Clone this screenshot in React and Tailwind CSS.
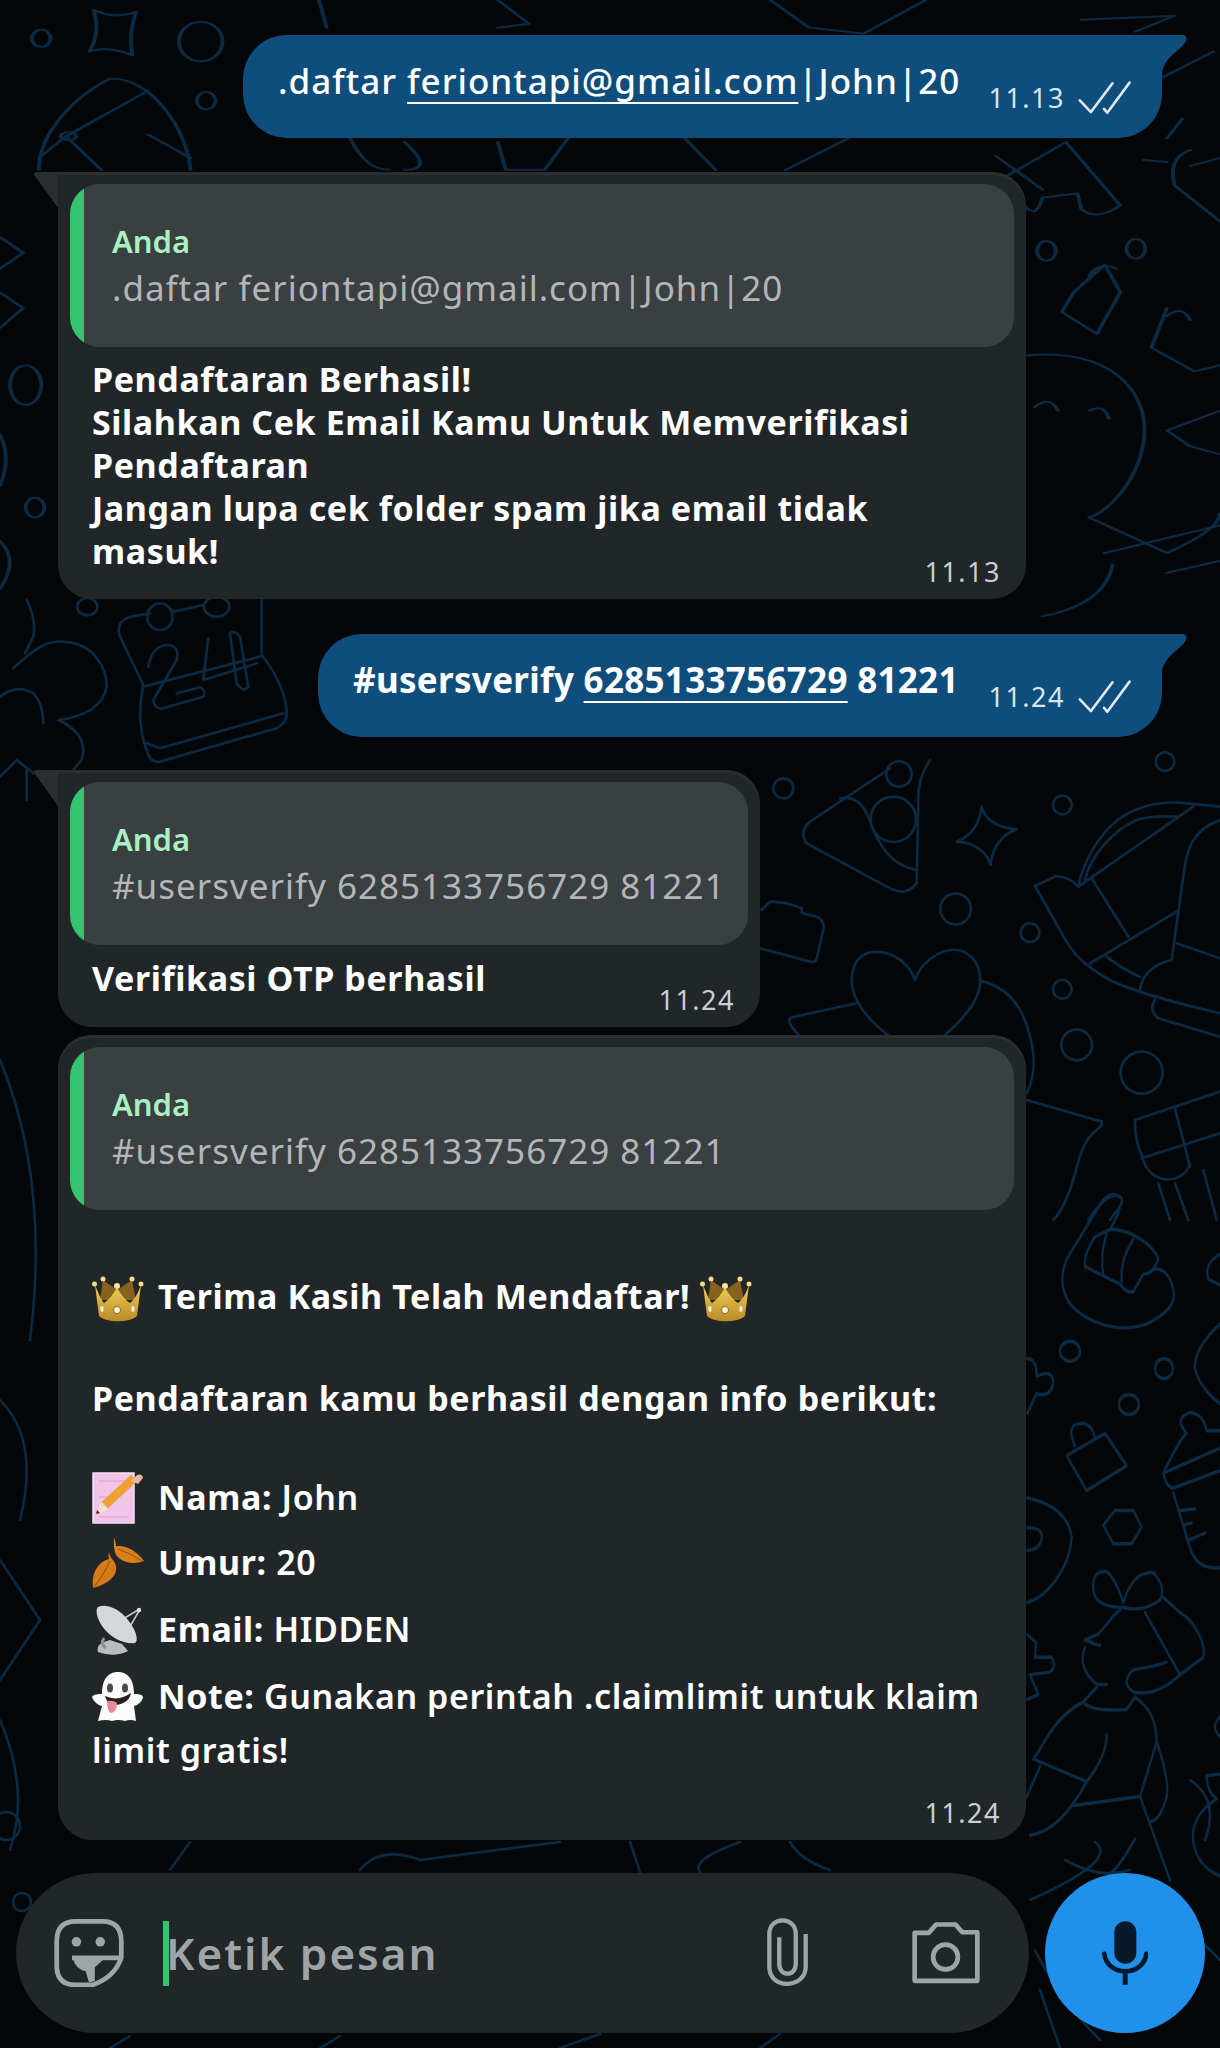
import React from 'react';

const FONT = "font-['Noto_Sans',sans-serif]";

function Wallpaper() {
  return (
    <svg className="absolute inset-0" width="1220" height="2048" viewBox="0 0 1220 2048" fill="none" stroke="#0b2b44" strokeWidth="2.6" strokeLinecap="round" strokeLinejoin="round">
      {/* right middle, traced from the picture */}
      <g transform="translate(760 760) scale(0.3333)" strokeWidth="8">
        <path d="M390 25 L150 185 Q115 215 140 250 L390 385 Q440 410 470 370 L475 130 Q470 60 510 0" />
        <path d="M240 115 C300 105 320 150 340 210 C370 280 410 320 470 330" />
        <circle cx="400" cy="178" r="68" />
        <circle cx="417" cy="42" r="38" />
        <circle cx="70" cy="85" r="30" />
        <circle cx="907" cy="135" r="28" />
        <circle cx="587" cy="447" r="46" />
        <circle cx="810" cy="518" r="28" />
        <circle cx="907" cy="688" r="28" />
        <circle cx="950" cy="855" r="46" />
        <circle cx="1145" cy="938" r="63" />
        <circle cx="1215" cy="5" r="28" />
        <path d="M665 140 Q680 200 770 208 Q700 235 692 315 Q670 250 590 245 Q655 220 665 140Z" />
        <path d="M465 660 C440 590 370 565 320 580 C270 600 265 670 290 720 C310 760 350 800 385 825 M465 660 C490 590 570 550 620 580 C670 610 670 680 640 730 C615 770 585 800 555 825" />
        <path d="M290 730 L95 772 Q80 780 95 800 L115 825" />
        <path d="M660 662 C740 680 790 740 810 830 C830 900 820 960 800 1000" />
        <path d="M800 1020 L1025 1085 Q1030 1095 1010 1110 C960 1150 960 1200 930 1290 C915 1330 900 1360 880 1380" />
        <path d="M5 450 L30 425 Q80 425 125 445 L125 460 L170 470 Q195 480 190 510 L170 595 Q165 610 150 605 L0 565" />
        <path d="M825 378 L885 350 Q920 345 955 380 Q975 280 1050 200 C1110 140 1200 120 1280 130 L1380 140" />
        <path d="M975 360 C990 290 1060 210 1130 180 C1180 165 1230 170 1250 170 M955 380 L1300 140" />
        <path d="M825 378 L900 510 C940 590 980 620 1050 660 C1110 690 1250 730 1380 760" />
        <path d="M995 355 L1105 530 M990 610 L1250 455 M1250 550 L1380 595 M1040 590 Q1090 630 1140 650" />
        <path d="M1380 180 C1300 210 1280 260 1270 350 L1235 600 Q1150 620 1140 690" />
        <path d="M1185 720 Q1165 750 1195 775 L1380 830" />
        <path d="M1125 1080 L1380 995 M1125 1085 Q1125 1150 1150 1195 M1145 1195 L1380 1120 M1245 1045 L1290 1220 M1150 1200 C1170 1270 1260 1280 1290 1215 M1195 1270 L1230 1380 M1245 1270 L1285 1380 M1330 1230 L1370 1380" />
        <path d="M985 1380 Q1030 1310 1070 1305 Q1095 1310 1080 1340 L1050 1380" />
      </g>
      {/* right lower */}
      <g transform="translate(1020 1100) scale(0.3333 0.4975)" strokeWidth="7">
        <path d="M300 195 Q270 180 240 210 L140 320 Q110 370 150 410 C200 450 300 470 380 450 C440 430 470 410 460 380 C450 350 420 330 390 345" />
        <path d="M300 215 Q290 240 270 260 C330 260 400 290 415 320 Q400 350 370 350 L340 385 Q320 390 300 370 L195 335 Q190 310 225 275 L270 260 M260 270 Q240 310 250 350 M340 280 Q300 320 305 365" />
        <ellipse cx="150" cy="505" rx="30" ry="20" />
        <ellipse cx="432" cy="540" rx="27" ry="20" />
        <ellipse cx="327" cy="612" rx="30" ry="20" />
        <path d="M140 715 L255 670 L320 735 L200 785 Z M165 695 Q135 650 185 650 Q215 650 225 680" />
        <path d="M250 855 L285 825 L340 825 L365 858 L335 892 L280 892Z" />
        <path d="M430 750 Q480 680 500 670 Q460 640 510 628 Q550 630 560 665 L600 665 M430 750 L600 700 M430 750 Q440 780 460 780 L600 745 M460 790 L510 900 Q530 945 600 940 M480 825 L525 822 M490 855 L515 850 M505 885 L555 870" />
        <path d="M220 985 Q215 945 260 948 Q285 960 310 1010 Q340 945 400 950 Q440 980 420 1005 Q370 1030 310 1020 Q225 1020 220 985Z" />
        <path d="M300 1025 C270 1040 240 1075 230 1075 L195 1085 Q245 1100 240 1095 M195 1100 Q170 1140 230 1175 L260 1175" />
        <path d="M430 1000 L480 1030 C530 1050 560 1100 550 1120 L480 1155 Q410 1200 340 1190 Q300 1170 340 1145 Q400 1140 440 1130 M375 1030 L480 1155" />
        <path d="M230 1180 L190 1210 C100 1240 70 1300 40 1325 L200 1370 Q260 1320 260 1275 M190 1210 Q210 1230 320 1225 L345 1200 Q410 1230 410 1290 L360 1400 L160 1418" />
        <path d="M60 1340 L20 1400 M200 1370 Q120 1470 30 1478 M410 1290 Q450 1370 440 1400 Q420 1450 390 1450 M360 1400 L450 1568 M345 1485 Q300 1540 270 1555" />
        <path d="M22 800 C100 810 150 840 155 880 C150 940 80 1000 22 1010 M22 860 Q70 860 65 880 Q60 905 22 905" />
        <path d="M22 520 Q50 520 50 555 Q100 540 100 570 Q90 600 50 590 L22 630 M22 1075 L48 1090 L45 1120 L95 1120 Q110 1140 90 1150 L30 1155 L55 1195 L22 1205" />
        <path d="M600 310 Q550 330 565 360 L600 372 M600 450 Q520 500 525 540 Q540 580 600 610 M600 1240 Q570 1260 600 1280 M600 1355 L560 1358 Q560 1390 590 1405 Q510 1440 520 1490 Q530 1540 600 1560" />
      </g>
      {/* calendar and clover on the left */}
      <g transform="translate(0 600) scale(0.3333)" strokeWidth="8">
        <path d="M785 0 L785 165 C830 220 860 290 860 340 Q860 370 830 385 L480 485 Q450 490 440 450 C420 400 415 330 430 255 L360 110 Q345 65 390 50 L450 40 M520 35 L610 15" />
        <ellipse cx="480" cy="50" rx="38" ry="40" />
        <ellipse cx="650" cy="20" rx="38" ry="30" />
        <ellipse cx="262" cy="20" rx="30" ry="26" />
        <path d="M430 260 L780 170 M440 430 L480 445 L850 340" />
        <path d="M445 200 Q455 140 500 135 Q540 135 530 180 L460 300 Q465 330 490 325 L610 290 Q620 270 600 262 L530 280" />
        <path d="M625 115 L610 240 L770 190 M690 100 L710 250 Q730 280 745 260 L720 110 Q700 90 690 100" />
        <path d="M40 205 C90 160 130 120 190 125 C280 130 320 200 320 260 C310 320 250 350 175 360 C240 390 260 430 245 480 L220 510" />
        <path d="M0 290 Q50 250 100 280 Q130 310 130 370 M80 0 Q110 60 100 110 L75 160 M0 530 L50 480 L100 520 M80 510 L80 600" />
      </g>
      {/* top band */}
      <g transform="scale(0.778 0.395)" strokeWidth="5">
        <ellipse cx="53" cy="97" rx="12" ry="22" />
        <ellipse cx="258" cy="105" rx="28" ry="50" />
        <ellipse cx="265" cy="255" rx="12" ry="22" />
        <path d="M120 25 Q150 50 175 30 Q165 80 170 140 Q140 115 115 130 Q130 80 120 25Z" />
        <path d="M50 430 C50 330 100 240 140 200 C190 190 240 320 245 430 M85 345 L190 230 M85 345 L130 430 M85 345 L50 400 M190 340 L245 400" />
        <circle cx="88" cy="345" r="10" />
        <path d="M410 0 L420 70 M640 0 L680 60 L640 70 M990 0 L1040 70 L1110 85 L1190 0 M1390 50 L1510 40 L1460 80 M1490 200 L1560 130 M1520 300 L1500 350 M1470 405 L1500 410" />
        <path d="M450 350 Q470 430 500 430 M520 360 Q560 430 520 430 M640 360 L650 430 L700 430 L730 350 M880 350 L920 430 M1010 430 L1090 350" />
        <path d="M1290 450 L1370 360 L1440 520 Q1410 560 1390 530 L1385 490 L1340 500 Q1330 570 1310 500 M1280 395 L1340 480" />
        <path d="M1530 380 Q1500 400 1510 470 L1568 560 M1530 420 L1568 400" />
        <ellipse cx="1345" cy="635" rx="12" ry="25" />
        <ellipse cx="1460" cy="630" rx="12" ry="25" />
        <path d="M1420 670 L1380 740 L1365 790 L1410 845 L1440 740 Z M1400 700 Q1410 660 1435 680" />
        <path d="M1500 780 L1480 880 L1535 940 L1568 925 M1500 800 Q1520 770 1530 810" />
        <path d="M1320 900 C1420 880 1480 980 1470 1120 C1460 1230 1420 1300 1400 1310 L1500 1400 Q1568 1340 1568 1300 M1400 1040 Q1420 1020 1425 1060 M1330 1030 Q1350 1000 1360 1040 M1568 1040 L1500 1090 L1530 1130 L1568 1150" />
        <path d="M1420 1400 L1568 1330 M1500 1450 L1568 1420 M1340 1560 Q1420 1530 1430 1430" />
        <ellipse cx="33" cy="975" rx="20" ry="50" />
        <ellipse cx="45" cy="1285" rx="12" ry="25" />
        <path d="M0 600 L30 640 L0 680 M0 740 L30 780 L0 830 M0 1100 Q15 1160 0 1230 M0 1370 Q25 1420 0 1490" />
      </g>
      {/* strip along the left edge and under the last bubble */}
      <path d="M0 1060 Q50 1180 30 1340 M0 1400 Q40 1440 20 1520 M0 1560 L40 1620 L0 1680 M0 1720 Q30 1790 10 1850" />
      <circle cx="6" cy="1826" r="14" />
      <circle cx="22" cy="1902" r="9" />
      <path d="M170 1870 L190 1842 M360 1870 Q380 1845 420 1860 L560 1842 M640 1872 L630 1842 M740 1842 Q690 1860 700 1872 M790 1842 Q800 1860 830 1870 M1095 1842 Q1120 1860 1030 1900 M1065 1860 Q1100 1880 1130 1870 M1190 1780 Q1220 1800 1205 1840" />
      <path d="M110 2048 L130 2036 M320 2048 L340 2036 M560 2048 L600 2034 M760 2048 L780 2034 M1040 1990 L1060 2048 M1035 1950 Q1060 2000 1100 2040 M1200 1940 L1220 1960" />
    </svg>
  );
}

function Checks() {
  return (
    <svg width="56" height="36" viewBox="350 180 170 110" fill="none" stroke="#dfe8ee" strokeWidth="8" strokeLinecap="round" strokeLinejoin="round">
      <path d="M358 242 L392 278 L458 190" />
      <path d="M432 268 L442 280 L510 188" />
    </svg>
  );
}

function Time({ children, className }) {
  return <span className={`text-[27px] leading-[36px] tracking-[1.5px] text-[#c9d0d3] ${className || ''}`}>{children}</span>;
}

function SentBubble({ width, children, time }) {
  return (
    <div className={`relative ml-auto mr-[58px] flex h-[103px] justify-between rounded-bl-[44px] rounded-br-[44px] rounded-tl-[44px] bg-[#0f4d7c] pl-[35px] pr-[29px] pt-[19px] ${width}`}>
      <svg className="absolute left-full top-0" width="25" height="36" viewBox="0 0 25 36">
        <path d="M0 0 L20 0 Q26 0 24 6 C20 15 6 18 0 36 Z" fill="#0f4d7c" />
      </svg>
      <div className="text-[35px] font-medium leading-[54px] tracking-[1px] text-white">{children}</div>
      <div className="flex items-center gap-[12px] self-end pb-[22px]">
        <Time className="text-[#dce5ea]">{time}</Time>
        <Checks />
      </div>
    </div>
  );
}

function Quote({ text }) {
  return (
    <div className="flex h-[163px] overflow-hidden rounded-[30px] bg-[#3a3f42]">
      <div className="w-[14px] flex-none bg-[#35c46f]" />
      <div className="pl-[28px] pt-[35px]">
        <div className="text-[31px] font-semibold leading-[44px] text-[#a9f0c3]">Anda</div>
        <div className="mt-[2px] text-[35px] leading-[46px] tracking-[1px] text-[#b3b6b8]">{text}</div>
      </div>
    </div>
  );
}

function ReceivedBubble({ width, tail, children, time, className }) {
  return (
    <div className={`relative ml-[58px] rounded-[34px] bg-[#212629] p-[12px] shadow-[inset_0_3px_0_#2b2f32] ${tail ? 'rounded-tl-none' : ''} ${width} ${className || ''}`}>
      {tail && (
        <svg className="absolute right-full top-0" width="25" height="36" viewBox="0 0 25 36">
          <path d="M25 0 L4 0 Q-1 0 2 4 L25 36 Z" fill="#2a2e31" />
        </svg>
      )}
      {children}
      <Time className="absolute bottom-[9px] right-[25px]">{time}</Time>
    </div>
  );
}

function Crown() {
  return (
    <svg width="52" height="48" viewBox="0 0 52 48">
      <defs>
        <linearGradient id="crownGold" x1="0" y1="0" x2="0" y2="1">
          <stop offset="0" stopColor="#f2cf5c" />
          <stop offset="1" stopColor="#b98b24" />
        </linearGradient>
      </defs>
      <path d="M11 4 L8 24 L44 24 L40 4 L25 14 Z" fill="#87621c" />
      <path d="M3 9 C8 21 10 25 12 27 C17 24 21 18 25 12 C29 18 33 24 38 27 C41 25 45 20 49 9 L45 40 C38 47 14 47 7 40 Z" fill="url(#crownGold)" />
      <circle cx="2.5" cy="8" r="2.5" fill="#f6dd85" />
      <circle cx="11" cy="3" r="2.5" fill="#f6dd85" />
      <circle cx="25" cy="10" r="3" fill="#f8e39a" />
      <circle cx="40" cy="3" r="2.5" fill="#f6dd85" />
      <circle cx="49" cy="8" r="2.5" fill="#f6dd85" />
      <circle cx="25" cy="34" r="3.6" fill="#f1efe6" stroke="#8e6d20" />
      <ellipse cx="10" cy="33" rx="1.6" ry="3" fill="#f3efe0" />
      <ellipse cx="41" cy="33" rx="1.6" ry="3" fill="#f3efe0" />
    </svg>
  );
}

function Memo() {
  return (
    <svg width="52" height="52" viewBox="0 0 52 52">
      <rect x="1" y="1" width="41" height="50" fill="#f1c5e9" stroke="#f8def4" strokeWidth="1.5" />
      <path d="M7 9 H37 M7 25 H26 M7 45 H37" stroke="#dc9ccf" strokeWidth="1" />
      <path d="M13 33 L42 6" stroke="#eea031" strokeWidth="9" />
      <path d="M39 9 L45 3 Q50 1 51 6 L46 12 Z" fill="#eeb4a8" />
      <path d="M9 31 L16 38 L5 42 Z" fill="#f5e3c6" />
      <path d="M5 38 L8 41 L4 42 Z" fill="#5d2310" />
    </svg>
  );
}

function Leaves() {
  return (
    <svg width="52" height="52" viewBox="0 0 52 52">
      <path d="M22 0 Q24 6 24 9 C34 8 44 13 52 24 C42 28 30 26 24 18 Q21 11 22 0Z" fill="#d9801b" />
      <path d="M26 12 Q38 16 50 24" stroke="#8f4f0c" strokeWidth="1" fill="none" />
      <path d="M17 15 Q18 20 20 22 C28 30 26 44 1 51 C-1 38 5 25 17 22 Q16 18 17 15Z" fill="#d67a17" />
      <path d="M18 24 Q12 38 2 50" stroke="#8f4f0c" strokeWidth="1" fill="none" />
    </svg>
  );
}

function Dish() {
  return (
    <svg width="52" height="52" viewBox="0 0 52 52">
      <path d="M18 36 C10 38 4 41 6 48 Q22 54 36 47 L30 40 Z" fill="#b9bcbe" />
      <path d="M26 18 L46 6 M36 26 L47 7" stroke="#c6c9cb" strokeWidth="1.5" />
      <circle cx="47" cy="6" r="2.2" fill="#dfe1e2" />
      <path d="M6 3 C14 -1 28 5 36 16 C44 26 47 36 43 39 C34 41 18 34 10 22 C5 14 3 7 6 3Z" fill="#d5d8da" />
      <path d="M12 34 Q8 40 14 44" stroke="#8d9092" strokeWidth="3" fill="none" />
    </svg>
  );
}

function Ghost() {
  return (
    <svg width="52" height="50" viewBox="0 0 52 50">
      <path d="M10 22 C10 5 18 0 26 0 C34 0 42 5 42 22 C46 22 50 22 51 25 C50 30 46 33 42 34 L44 49 Q38 47 33 49 Q26 47 20 49 Q14 47 6 49 L10 34 C6 33 2 30 0 25 C2 22 6 22 10 22Z" fill="#fbfbfb" />
      <ellipse cx="18" cy="16" rx="3" ry="4.5" fill="#4a4a4e" />
      <ellipse cx="33" cy="16" rx="3" ry="4.5" fill="#4a4a4e" />
      <path d="M13 24 Q26 30 39 21 C38 30 26 35 19 32 Q14 29 13 24Z" fill="#262224" />
      <path d="M15 29 Q22 28 25 31 Q25 40 19 41 Q15 39 15 29Z" fill="#e58a94" />
    </svg>
  );
}

function Row({ emoji, children, className }) {
  return (
    <div className={`flex h-[65px] items-center whitespace-pre ${className || ''}`}>
      <span className="mr-[14px] flex h-[52px] w-[52px] flex-none items-center justify-center">{emoji}</span>
      <span>{children}</span>
    </div>
  );
}

function InputBar() {
  const icon = '#9fa5a6';
  return (
    <div className="mt-[33px] flex items-center gap-[16px] pl-[16px] pr-[15px]">
      <div className="flex h-[160px] w-[1014px] items-center rounded-[80px] bg-[#212629] pl-[38px]">
        <svg width="70" height="68" viewBox="103 58 204 200" fill="none" stroke={icon} strokeWidth="14" strokeLinejoin="round">
          <path d="M165 65 L245 65 Q300 65 300 125 L300 172 Q280 230 215 252 L165 252 Q110 252 110 195 L110 125 Q110 65 165 65Z" />
          <circle cx="168" cy="125" r="14" fill={icon} stroke="none" />
          <circle cx="238" cy="125" r="14" fill={icon} stroke="none" />
          <path d="M155 172 L295 172" />
          <path d="M158 175 Q165 205 195 212 L205 245 L222 240 L222 200 L250 175 Z" fill={icon} stroke="none" />
        </svg>
        <div className="relative z-10 ml-[39px] h-[65px] w-[6px] bg-[#35c46f]" />
        <div className="ml-[-3px] text-[44px] font-semibold leading-[65px] tracking-[2px] text-[#9fa5a6]">Ketik pesan</div>
        <svg className="ml-auto" width="43" height="72" viewBox="118 105 130 215" fill="none" stroke={icon} strokeWidth="13" strokeLinecap="butt">
          <path d="M235 155 L235 255 C235 320 125 325 125 255 L125 155 C125 100 205 100 205 155 L205 245 C205 285 155 285 155 245 L155 165" />
        </svg>
        <svg className="ml-[102px] mr-[49px]" width="68" height="62" viewBox="550 128 203 184" fill="none" stroke={icon} strokeWidth="14" strokeLinejoin="round">
          <path d="M558 160 L600 160 L622 135 L680 135 L700 158 L745 158 L745 303 L558 303 Z" />
          <circle cx="650" cy="232" r="37" />
        </svg>
      </div>
      <div className="flex h-[160px] w-[160px] items-center justify-center rounded-full bg-[#2190ea]">
        <svg width="46" height="66" viewBox="1115 115 138 195" fill="none">
          <rect x="1152" y="117" width="66" height="128" rx="33" fill="#08192b" />
          <path d="M1122 215 C1130 285 1240 285 1248 215" stroke="#08192b" strokeWidth="14" strokeLinecap="round" />
          <rect x="1177" y="268" width="15" height="40" fill="#08192b" />
        </svg>
      </div>
    </div>
  );
}

export default function App() {
  return (
    <div className={`relative h-[2048px] w-[1220px] overflow-hidden bg-[#040608] ${FONT}`}>
      <Wallpaper />
      <div className="relative pt-[35px]">
        <SentBubble width="w-[919px]" time="11.13">
          .daftar <span className="underline decoration-2 underline-offset-[8px]">feriontapi@gmail.com</span>|John|20
        </SentBubble>

        <ReceivedBubble width="w-[968px]" tail time="11.13" className="mt-[34px]">
          <Quote text=".daftar feriontapi@gmail.com|John|20" />
          <div className="px-[22px] pb-[14px] pt-[11px] text-[34px] font-bold leading-[43px] tracking-[0.6px] text-white">
            Pendaftaran Berhasil!<br />
            Silahkan Cek Email Kamu Untuk Memverifikasi<br />
            Pendaftaran<br />
            Jangan lupa cek folder spam jika email tidak<br />
            masuk!
          </div>
        </ReceivedBubble>

        <div className="mt-[35px]">
          <SentBubble width="w-[844px]" time="11.24">
            <span className="font-bold tracking-[0.3px]">#usersverify <span className="underline decoration-2 underline-offset-[8px]">6285133756729</span> 81221</span>
          </SentBubble>
        </div>

        <ReceivedBubble width="w-[702px]" tail time="11.24" className="mt-[33px]">
          <Quote text="#usersverify 6285133756729 81221" />
          <div className="px-[22px] pb-[15px] pt-[12px] text-[34px] font-bold leading-[43px] tracking-[0.6px] text-white">Verifikasi OTP berhasil</div>
        </ReceivedBubble>

        <ReceivedBubble width="w-[968px]" time="11.24" className="mt-[8px]">
          <Quote text="#usersverify 6285133756729 81221" />
          <div className="px-[22px] pb-[56px] pt-[57px] text-[34px] font-bold leading-[43px] tracking-[0.6px] text-white">
            <Row emoji={<Crown />}>Terima Kasih Telah Mendaftar! <span className="inline-block align-middle"><Crown /></span></Row>
            <div className="mt-[45px]">Pendaftaran kamu berhasil dengan info berikut:</div>
            <Row emoji={<Memo />} className="mt-[45px]">Nama: <span className="font-semibold">John</span></Row>
            <Row emoji={<Leaves />}>Umur: <span className="font-semibold">20</span></Row>
            <Row emoji={<Dish />} className="mt-[2px]">Email: <span className="font-semibold">HIDDEN</span></Row>
            <Row emoji={<Ghost />} className="mt-[2px]">Note: <span className="font-semibold">Gunakan perintah .claimlimit untuk klaim</span></Row>
            <div className="font-semibold">limit gratis!</div>
          </div>
        </ReceivedBubble>

        <InputBar />
      </div>
    </div>
  );
}
